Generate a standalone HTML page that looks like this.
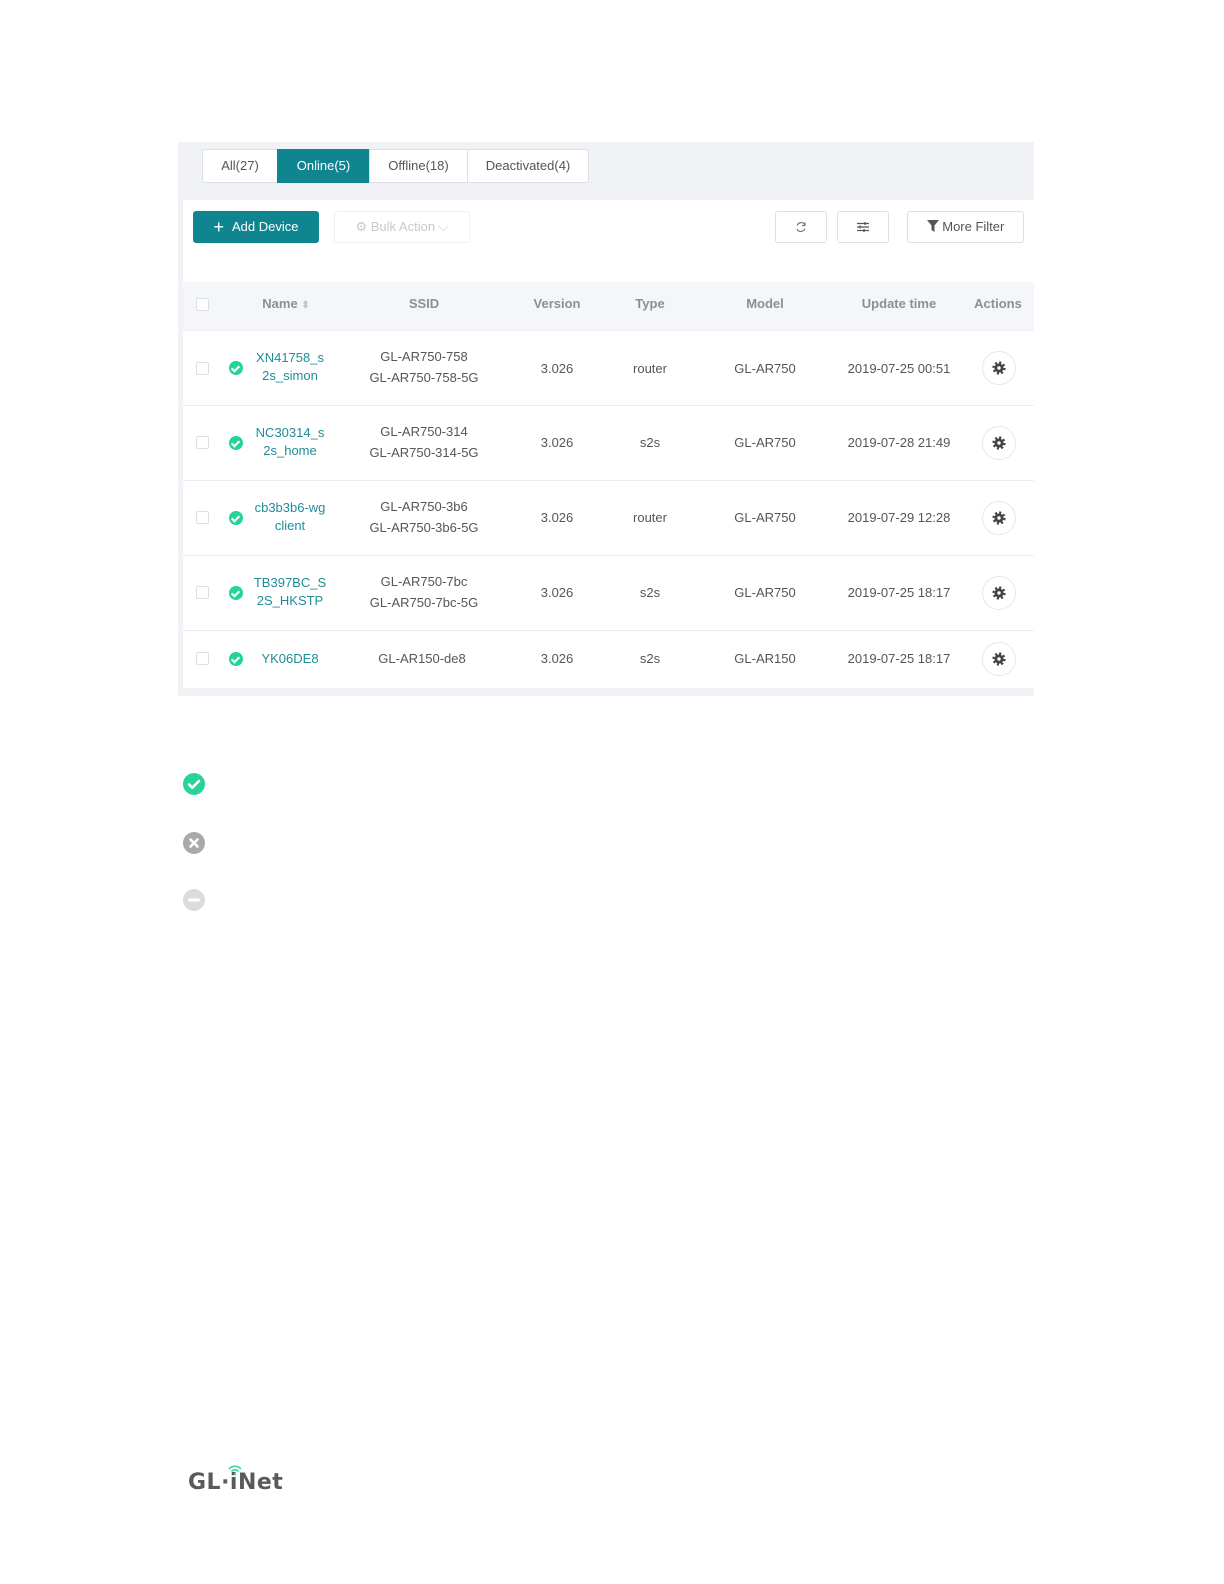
<!DOCTYPE html>
<html><head><meta charset="utf-8"><style>
*{margin:0;padding:0;box-sizing:border-box}
body{width:1224px;height:1584px;background:#fff;position:relative;font-family:"Liberation Sans",sans-serif;overflow:hidden}
.a{position:absolute}
.c{position:absolute;text-align:center;transform:translateX(-50%);white-space:nowrap;font-size:13px;color:#555;line-height:21px}
.tab{position:absolute;top:149px;height:34px;border:1px solid #dcdfe6;background:#fff;font-size:13px;color:#555;text-align:center;line-height:32px}
.btn{position:absolute;top:211px;height:32px;border:1px solid #dcdfe6;border-radius:3px;background:#fff}
.h{position:absolute;top:296px;font-size:13px;font-weight:bold;color:#8a8f99;transform:translateX(-50%);white-space:nowrap}
.cb{position:absolute;left:196px;width:13px;height:13px;border:1px solid #dcdfe6;border-radius:2px;background:#fff}
.ok{position:absolute;left:229px;width:14px;height:14px;border-radius:50%;background:#27d39a}
.ok:after{content:"";position:absolute;left:4px;top:3px;width:3px;height:6px;border:solid #fff;border-width:0 2px 2px 0;transform:rotate(45deg)}
.nm{color:#1f8d97}
.sep{position:absolute;left:183px;width:851px;height:1px;background:#ebeef5}
.gear{position:absolute;left:982px;width:34px;height:34px;border:1px solid #e4e7ed;border-radius:50%;background:#fff}
.gear svg{position:absolute;left:9px;top:9px}
</style></head><body>
<div class="a" style="left:178px;top:142px;width:856px;height:554px;background:#f0f2f5"></div>
<div class="a" style="left:183px;top:200px;width:851px;height:488px;background:#fff"></div>
<div class="a" style="left:183px;top:282px;width:851px;height:48px;background:#f5f6fa"></div>

<div class="tab" style="left:202px;width:76px;border-radius:3px 0 0 3px">All(27)</div>
<div class="tab" style="left:277px;width:93px;background:#0f8590;border-color:#0f8590;color:#fff">Online(5)</div>
<div class="tab" style="left:369px;width:99px">Offline(18)</div>
<div class="tab" style="left:467px;width:122px;border-radius:0 3px 3px 0">Deactivated(4)</div>

<div class="a" style="left:193px;top:211px;width:126px;height:32px;background:#0f8590;border-radius:3px;color:#fff;font-size:13px;line-height:32px;text-align:center"><span style="font-size:18px;vertical-align:-2px;margin-right:8px">+</span>Add Device</div>
<div class="btn" style="left:334px;width:136px;border-color:#eef0f3;color:#c7c9cc;font-size:13px;line-height:30px;text-align:center">⚙ Bulk Action ⌵</div>
<div class="btn" style="left:775px;width:52px"><svg class="a" style="left:19px;top:9px" width="12" height="12" viewBox="0 0 12 12"><path d="M10 4A4.2 4.2 0 0 0 2.2 4.5M2 8A4.2 4.2 0 0 0 9.8 7.5" fill="none" stroke="#777" stroke-width="1.2"/><path d="M10 1.5V4.5H7" fill="none" stroke="#777" stroke-width="1.2"/></svg></div>
<div class="btn" style="left:837px;width:52px"><svg class="a" style="left:18px;top:9px" width="14" height="12" viewBox="0 0 14 12"><path d="M1 2.5H13M1 6H13M1 9.5H13M9 1V4M4 4.5V7.5M8 8V11" stroke="#555" stroke-width="1.3"/></svg></div>
<div class="btn" style="left:907px;width:117px;font-size:13px;color:#555;line-height:30px;text-align:center"><svg width="12" height="12" viewBox="0 0 12 12" style="vertical-align:-1px"><path d="M0 0H12L7.5 5.5V12L4.5 10V5.5Z" fill="#555"/></svg> More Filter</div>

<div class="cb" style="top:298px"></div>
<div class="h" style="left:286px">Name <span style="color:#c0c4cc;font-size:10px">⬍</span></div>
<div class="h" style="left:424px">SSID</div>
<div class="h" style="left:557px">Version</div>
<div class="h" style="left:650px">Type</div>
<div class="h" style="left:765px">Model</div>
<div class="h" style="left:899px">Update time</div>
<div class="h" style="left:998px">Actions</div>
<div class="sep" style="top:330px"></div>

<!-- row 1 -->
<div class="cb" style="top:362px"></div><div class="ok" style="top:361px"></div>
<div class="c nm" style="left:290px;top:349px;line-height:18px">XN41758_s<br>2s_simon</div>
<div class="c" style="left:424px;top:346px">GL-AR750-758<br>GL-AR750-758-5G</div>
<div class="c" style="left:557px;top:358px">3.026</div><div class="c" style="left:650px;top:358px">router</div>
<div class="c" style="left:765px;top:358px">GL-AR750</div><div class="c" style="left:899px;top:358px">2019-07-25 00:51</div>
<div class="gear" style="top:351px"><svg width="14" height="14" viewBox="0 0 14 14"><circle cx="7" cy="7" r="4.6" fill="#444"/><circle cx="7" cy="7" r="5.4" fill="none" stroke="#444" stroke-width="2.4" stroke-dasharray="2.1 2.14"/><circle cx="7" cy="7" r="1.7" fill="#fff"/></svg></div>
<div class="sep" style="top:405px"></div>
<!-- row 2 -->
<div class="cb" style="top:436px"></div><div class="ok" style="top:436px"></div>
<div class="c nm" style="left:290px;top:424px;line-height:18px">NC30314_s<br>2s_home</div>
<div class="c" style="left:424px;top:421px">GL-AR750-314<br>GL-AR750-314-5G</div>
<div class="c" style="left:557px;top:432px">3.026</div><div class="c" style="left:650px;top:432px">s2s</div>
<div class="c" style="left:765px;top:432px">GL-AR750</div><div class="c" style="left:899px;top:432px">2019-07-28 21:49</div>
<div class="gear" style="top:426px"><svg width="14" height="14" viewBox="0 0 14 14"><circle cx="7" cy="7" r="4.6" fill="#444"/><circle cx="7" cy="7" r="5.4" fill="none" stroke="#444" stroke-width="2.4" stroke-dasharray="2.1 2.14"/><circle cx="7" cy="7" r="1.7" fill="#fff"/></svg></div>
<div class="sep" style="top:480px"></div>
<!-- row 3 -->
<div class="cb" style="top:511px"></div><div class="ok" style="top:511px"></div>
<div class="c nm" style="left:290px;top:499px;line-height:18px">cb3b3b6-wg<br>client</div>
<div class="c" style="left:424px;top:496px">GL-AR750-3b6<br>GL-AR750-3b6-5G</div>
<div class="c" style="left:557px;top:507px">3.026</div><div class="c" style="left:650px;top:507px">router</div>
<div class="c" style="left:765px;top:507px">GL-AR750</div><div class="c" style="left:899px;top:507px">2019-07-29 12:28</div>
<div class="gear" style="top:501px"><svg width="14" height="14" viewBox="0 0 14 14"><circle cx="7" cy="7" r="4.6" fill="#444"/><circle cx="7" cy="7" r="5.4" fill="none" stroke="#444" stroke-width="2.4" stroke-dasharray="2.1 2.14"/><circle cx="7" cy="7" r="1.7" fill="#fff"/></svg></div>
<div class="sep" style="top:555px"></div>
<!-- row 4 -->
<div class="cb" style="top:586px"></div><div class="ok" style="top:586px"></div>
<div class="c nm" style="left:290px;top:574px;line-height:18px">TB397BC_S<br>2S_HKSTP</div>
<div class="c" style="left:424px;top:571px">GL-AR750-7bc<br>GL-AR750-7bc-5G</div>
<div class="c" style="left:557px;top:582px">3.026</div><div class="c" style="left:650px;top:582px">s2s</div>
<div class="c" style="left:765px;top:582px">GL-AR750</div><div class="c" style="left:899px;top:582px">2019-07-25 18:17</div>
<div class="gear" style="top:576px"><svg width="14" height="14" viewBox="0 0 14 14"><circle cx="7" cy="7" r="4.6" fill="#444"/><circle cx="7" cy="7" r="5.4" fill="none" stroke="#444" stroke-width="2.4" stroke-dasharray="2.1 2.14"/><circle cx="7" cy="7" r="1.7" fill="#fff"/></svg></div>
<div class="sep" style="top:630px"></div>
<!-- row 5 -->
<div class="cb" style="top:652px"></div><div class="ok" style="top:652px"></div>
<div class="c nm" style="left:290px;top:648px">YK06DE8</div>
<div class="c" style="left:422px;top:648px">GL-AR150-de8</div>
<div class="c" style="left:557px;top:648px">3.026</div><div class="c" style="left:650px;top:648px">s2s</div>
<div class="c" style="left:765px;top:648px">GL-AR150</div><div class="c" style="left:899px;top:648px">2019-07-25 18:17</div>
<div class="gear" style="top:642px"><svg width="14" height="14" viewBox="0 0 14 14"><circle cx="7" cy="7" r="4.6" fill="#444"/><circle cx="7" cy="7" r="5.4" fill="none" stroke="#444" stroke-width="2.4" stroke-dasharray="2.1 2.14"/><circle cx="7" cy="7" r="1.7" fill="#fff"/></svg></div>

<!-- legend -->
<svg class="a" style="left:182px;top:772px" width="24" height="24" viewBox="0 0 24 24"><circle cx="12" cy="12" r="11" fill="#27d39a"/><path d="M7 12.5l3.3 3.2L17 9" fill="none" stroke="#fff" stroke-width="2.6" stroke-linecap="round" stroke-linejoin="round"/></svg>
<svg class="a" style="left:182px;top:831px" width="24" height="24" viewBox="0 0 24 24"><circle cx="12" cy="12" r="11" fill="#a9a9a9"/><path d="M8.5 8.5l7 7M15.5 8.5l-7 7" stroke="#fff" stroke-width="2.6" stroke-linecap="round"/></svg>
<svg class="a" style="left:182px;top:888px" width="24" height="24" viewBox="0 0 24 24"><circle cx="12" cy="12" r="11" fill="#dcdcdc"/><path d="M7.5 12h9" stroke="#fff" stroke-width="3" stroke-linecap="round"/></svg>

<!-- logo -->
<div class="a" style="left:188px;top:1470px;font-family:'DejaVu Sans',sans-serif;font-weight:bold;font-size:22px;color:#5a5a5a;letter-spacing:0.5px">GL·iNet</div>
<svg class="a" style="left:227px;top:1465px" width="16" height="10" viewBox="0 0 16 10"><path d="M2 4a8 8 0 0 1 12 0M4.5 6.5a4.5 4.5 0 0 1 7 0" fill="none" stroke="#3fd3a8" stroke-width="1.6"/><circle cx="8" cy="9" r="1.2" fill="#3fd3a8"/></svg>
</body></html>
